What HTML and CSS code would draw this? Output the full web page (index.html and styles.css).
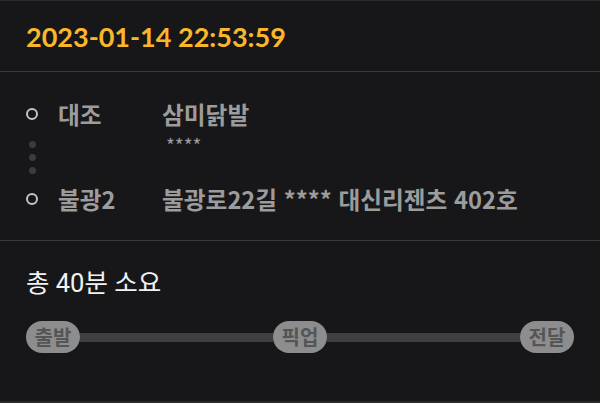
FILE: index.html
```html
<!DOCTYPE html>
<html lang="ko">
<head>
    <meta charset="UTF-8">
    <meta name="viewport" content="width=device-width, initial-scale=1.0">
    <title>주문 상세</title>
    <link rel="stylesheet" href="styles.css">
</head>
<body>
    <div class="order">
        <div class="order-header">
            <span class="order-time">2023-01-14 22:53:59</span>
        </div>

        <!-- 출발지 / 도착지 -->
        <div class="route">
            <span class="marker"></span>
            <span class="route-label">대조</span>
            <span class="route-place">삼미닭발</span>

            <span class="dots"><i></i><i></i><i></i></span>
            <span></span>
            <span class="route-detail">****</span>

            <span class="marker"></span>
            <span class="route-label">불광2</span>
            <span class="route-place">불광로22길 **** 대신리젠츠 402호</span>
        </div>

        <div class="summary">
            <p class="duration">총 40분 소요</p>
            <div class="progress">
                <span class="step">출발</span>
                <span class="track"></span>
                <span class="step">픽업</span>
                <span class="track"></span>
                <span class="step">전달</span>
            </div>
        </div>
    </div>
</body>
</html>
```

FILE: styles.css
```css
:root {
    --bg: #171719;
    --line: #3a3a3c;
    --gray-text: #9c9c9c;
    --amarelo: #fbb72a;
}

body {
    margin: 0;
    background-color: var(--bg);
    font-family: Lato, "Noto Sans CJK KR", sans-serif;
    color: var(--gray-text);
}

.order {
    height: 400px;
    border-top: 1px solid #2a2a2c;
    border-bottom: 2px solid #2a2a2c;
}

/* Cabeçalho com a data */
.order-header {
    height: 70px;
    display: flex;
    align-items: center;
    padding: 0 26px;
    border-bottom: 1px solid var(--line);
}

.order-time {
    color: var(--amarelo);
    font-size: 27px;
    font-weight: bold;
    margin-top: 1px;
}

/* Rota */
.route {
    display: grid;
    grid-template-columns: 12px 84px 1fr;
    grid-template-rows: 30px 55px 30px;
    column-gap: 20px;
    align-items: center;
    padding: 27px 26px 26px;
    border-bottom: 1px solid var(--line);
    font-family: "Noto Sans CJK KR", sans-serif;
}

.marker {
    width: 8px;
    height: 8px;
    border: 2px solid #c4c4c4;
    border-radius: 50%;
}

.route-label,
.route-place {
    font-size: 23.7px;
    font-weight: bold;
    line-height: 30px;
}

.dots {
    align-self: start;
    display: flex;
    flex-direction: column;
    align-items: center;
    gap: 6px;
    padding-top: 12px;
}

.dots i {
    width: 7px;
    height: 7px;
    border-radius: 50%;
    background-color: #3c3c3f;
}

.route-detail {
    align-self: start;
    padding: 7px 0 0 4px;
    font-size: 19px;
    line-height: 18px;
}

/* Resumo */
.summary {
    padding: 26px 26px 0;
    font-family: Roboto, "Noto Sans CJK KR", sans-serif;
}

.duration {
    margin: 0 0 22px;
    color: #f2f2f2;
    font-size: 25.5px;
    line-height: 32px;
}

.progress {
    display: flex;
    align-items: center;
}

.track {
    flex: 1;
    height: 9px;
    background-color: #3f3f42;
}

.step {
    width: 54px;
    height: 32px;
    line-height: 32px;
    text-align: center;
    border-radius: 16px;
    background-color: #8d8d8d;
    color: #555557;
    font-family: "Noto Sans CJK KR", sans-serif;
    font-size: 20px;
    font-weight: bold;
}
```
